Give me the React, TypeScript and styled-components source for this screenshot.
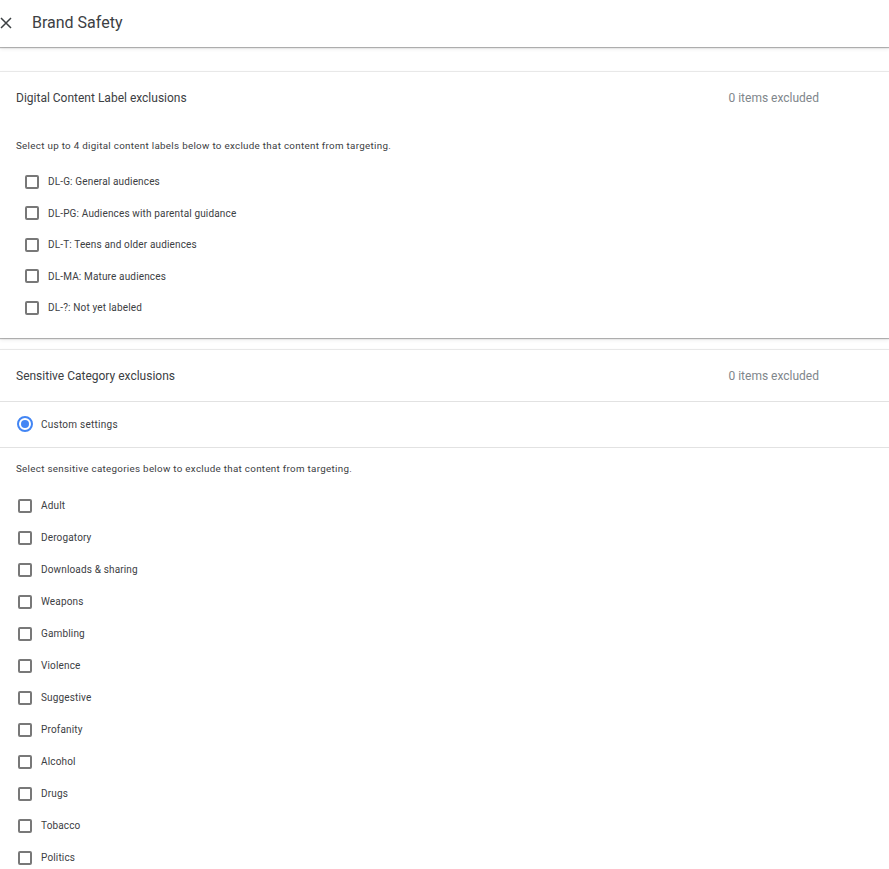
import React from "react";
import styled, { createGlobalStyle } from "styled-components";

const Global = createGlobalStyle`
  html, body { margin: 0; padding: 0; background: #fff; }
  body { font-family: Roboto, "Noto Sans", Arial, sans-serif; color: #3c4043; }
  * { box-sizing: border-box; }
`;

const Page = styled.div`
  display: flex;
  flex-direction: column;
  width: 100%;
`;

const TopBar = styled.header`
  height: 47px;
  display: flex;
  align-items: center;
  gap: 20px;
  padding-bottom: 2px;
  box-shadow: 0 1px 1px rgba(0, 0, 0, 0.28), 0 2px 4px rgba(0, 0, 0, 0.08);
  position: relative;
  z-index: 1;
`;

const CloseBtn = styled.button`
  width: 12px;
  height: 12px;
  padding: 0;
  border: 0;
  background: none;
  display: flex;
  align-items: center;
  justify-content: center;
  color: #3c4043;
`;

const Title = styled.h1`
  margin: 0;
  font-size: 16px;
  font-weight: 400;
  color: #3c4043;
`;

const Card = styled.section<{ $top: number }>`
  margin-top: ${(p) => p.$top}px;
  border-top: 1px solid #e8e8e8;
  box-shadow: 0 1px 1px rgba(0, 0, 0, 0.28), 0 2px 4px rgba(0, 0, 0, 0.08);
  display: flex;
  flex-direction: column;
`;

const CardHeader = styled.div<{ $h: number; $divider?: boolean }>`
  height: ${(p) => p.$h}px;
  display: flex;
  align-items: center;
  justify-content: space-between;
  padding: 2px 70px 0 16px;
  border-bottom: ${(p) => (p.$divider ? "1px solid #e2e2e2" : "0")};
`;

const CardTitle = styled.span`
  font-size: 12px;
  color: #3c4043;
`;

const Count = styled.span`
  font-size: 12px;
  color: #80868b;
`;

const RadioRow = styled.label`
  height: 46px;
  display: flex;
  align-items: center;
  gap: 8px;
  padding-left: 17px;
  border-bottom: 1px solid #e2e2e2;
  font-size: 10px;
  letter-spacing: 0.25px;
  color: #3c4043;
`;

const Radio = styled.span`
  width: 16px;
  height: 16px;
  border-radius: 50%;
  border: 2px solid #4285f4;
  display: flex;
  align-items: center;
  justify-content: center;
  &::after {
    content: "";
    width: 8px;
    height: 8px;
    border-radius: 50%;
    background: #4285f4;
  }
`;

const Description = styled.p<{ $top: number; $bottom: number }>`
  margin: ${(p) => p.$top}px 0 ${(p) => p.$bottom}px 16px;
  font-size: 9.8px;
  line-height: 12px;
  letter-spacing: 0.3px;
  color: #3c4043;
`;

const List = styled.div<{ $bottom: number }>`
  display: flex;
  flex-direction: column;
  padding-bottom: ${(p) => p.$bottom}px;
`;

const Row = styled.label<{ $h: number; $inset: number; $gap: number }>`
  height: ${(p) => p.$h}px;
  display: flex;
  align-items: center;
  gap: ${(p) => p.$gap}px;
  padding-left: ${(p) => p.$inset}px;
  font-size: 10px;
  letter-spacing: 0.15px;
  color: #3c4043;
`;

const Box = styled.span`
  width: 14px;
  height: 14px;
  border: 2px solid #787878;
  border-radius: 2px;
  flex: none;
`;

const dlLabels = [
  "DL-G: General audiences",
  "DL-PG: Audiences with parental guidance",
  "DL-T: Teens and older audiences",
  "DL-MA: Mature audiences",
  "DL-?: Not yet labeled",
];

const sensitive = [
  "Adult",
  "Derogatory",
  "Downloads & sharing",
  "Weapons",
  "Gambling",
  "Violence",
  "Suggestive",
  "Profanity",
  "Alcohol",
  "Drugs",
  "Tobacco",
  "Politics",
];

export default function App() {
  return (
    <Page>
      <Global />
      <TopBar>
        <CloseBtn aria-label="Close">
          <svg width="12" height="12" viewBox="0 0 12 12">
            <path d="M1 1 L11 11 M11 1 L1 11" stroke="#3c4043" strokeWidth="1.5" fill="none" />
          </svg>
        </CloseBtn>
        <Title>Brand Safety</Title>
      </TopBar>

      <Card $top={24}>
        <CardHeader $h={50}>
          <CardTitle>Digital Content Label exclusions</CardTitle>
          <Count>0 items excluded</Count>
        </CardHeader>
        <Description $top={18} $bottom={14}>
          Select up to 4 digital content labels below to exclude that content from targeting.
        </Description>
        <List $bottom={14}>
          {dlLabels.map((l) => (
            <Row key={l} $h={31.5} $inset={25} $gap={9}>
              <Box />
              {l}
            </Row>
          ))}
        </List>
      </Card>

      <Card $top={11}>
        <CardHeader $h={52} $divider>
          <CardTitle>Sensitive Category exclusions</CardTitle>
          <Count>0 items excluded</Count>
        </CardHeader>
        <RadioRow>
          <Radio />
          Custom settings
        </RadioRow>
        <Description $top={15} $bottom={15}>
          Select sensitive categories below to exclude that content from targeting.
        </Description>
        <List $bottom={8}>
          {sensitive.map((l) => (
            <Row key={l} $h={32} $inset={18} $gap={9}>
              <Box />
              {l}
            </Row>
          ))}
        </List>
      </Card>
    </Page>
  );
}
